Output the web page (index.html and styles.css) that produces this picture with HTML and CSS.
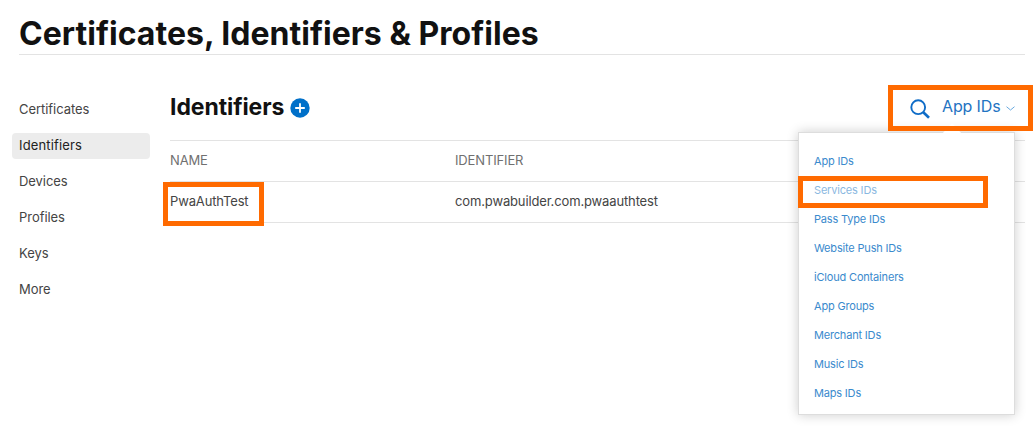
FILE: index.html
```html
<!DOCTYPE html>
<html lang="en">
<head>
<meta charset="utf-8">
<title>Certificates, Identifiers &amp; Profiles</title>
<link rel="stylesheet" href="styles.css">
</head>
<body>
<header class="page-header"><h1 class="page-title">Certificates, Identifiers &amp; Profiles</h1></header>
<div class="layout">
  <nav class="sidebar">
    <a class="nav-item">Certificates</a>
    <a class="nav-item active">Identifiers</a>
    <a class="nav-item">Devices</a>
    <a class="nav-item">Profiles</a>
    <a class="nav-item">Keys</a>
    <a class="nav-item">More</a>
  </nav>
  <main class="content">
    <div class="toolbar">
      <h2 class="section-title">Identifiers</h2>
      <svg class="add-icon" viewBox="0 0 20 20"><circle cx="10" cy="10" r="9.7" fill="#0070c9"/><path d="M10 5.2v9.6M5.2 10h9.6" stroke="#fff" stroke-width="1.8"/></svg>
      <div class="filter">
        <svg class="search-icon" viewBox="0 0 20 20" fill="none" stroke="#0f6cc7"><circle cx="8.2" cy="8.2" r="6.9" stroke-width="1.9"/><path d="M13 13l6 5.8" stroke-width="2.6"/></svg>
        <span class="filter-label">App IDs</span>
        <svg class="chevron" viewBox="0 0 9 5" fill="none" stroke="#69a9de"><path d="M.5.7l4 3.3 4-3.3"/></svg>
        <div class="menu">
          <span class="menu-arrow"></span>
          <a class="menu-item">App IDs</a>
          <a class="menu-item hovered"><span class="menu-text">Services IDs</span><span class="callout callout-service"></span></a>
          <a class="menu-item">Pass Type IDs</a>
          <a class="menu-item">Website Push IDs</a>
          <a class="menu-item">iCloud Containers</a>
          <a class="menu-item">App Groups</a>
          <a class="menu-item">Merchant IDs</a>
          <a class="menu-item">Music IDs</a>
          <a class="menu-item">Maps IDs</a>
        </div>
        <span class="callout callout-filter"></span>
      </div>
    </div>
    <div class="table">
      <div class="row head"><span class="cell-name">NAME</span><span class="cell-id">IDENTIFIER</span></div>
      <div class="row"><span class="cell-name">PwaAuthTest<span class="callout callout-name"></span></span><span class="cell-id">com.pwabuilder.com.pwaauthtest</span></div>
    </div>
  </main>
</div>
</body>
</html>
```
FILE: styles.css
```css
* { box-sizing: border-box; }
body {
  margin: 0;
  height: 448px;
  overflow: hidden;
  background: #fff;
  color: #444;
  font-family: Inter, "Liberation Sans", sans-serif;
  font-size: 13px;
  letter-spacing: -.14px;
}
.page-header {
  height: 55px;
  margin: 0 11px 0 19px;
  padding-top: 13px;
  border-bottom: 1px solid #e3e3e3;
}
.page-title {
  margin: 0;
  font-size: 32px;
  line-height: 41px;
  font-weight: 650;
  letter-spacing: .03px;
  color: #111;
  white-space: nowrap;
}
.layout { display: flex; padding: 0 11px 0 12px; }
.sidebar { width: 138px; margin-right: 20px; padding-top: 42px; letter-spacing: -.05px; }
.nav-item {
  display: block;
  height: 26px;
  margin-bottom: 10px;
  padding-left: 7px;
  line-height: 25px;
  border-radius: 4px;
}
.nav-item.active { background: #ececec; color: #222; letter-spacing: .14px; }
.content { flex: 1; padding-top: 31px; }
.toolbar { display: flex; align-items: flex-start; height: 54px; }
.section-title {
  width: 120px;
  margin: 5px 0 0;
  font-size: 23px;
  line-height: 32px;
  font-weight: 650;
  letter-spacing: -.08px;
  color: #111;
}
.add-icon { width: 20px; height: 20px; margin-top: 12px; }
.filter {
  position: relative;
  display: flex;
  width: 145px;
  height: 46px;
  margin: -1px -8px 0 auto;
  padding-left: 22px;
}
.search-icon { width: 20px; height: 20px; margin-top: 14px; }
.filter-label {
  width: 60px;
  margin-left: 12px;
  font-size: 16px;
  line-height: 43px;
  color: #2373c2;
  white-space: nowrap;
}
.chevron { width: 9px; height: 5px; margin: 21px 0 0 4px; }
.callout {
  position: absolute;
  z-index: 3;
  border: 5px solid #ff6a00;
}
.callout-filter { inset: 0; }
.menu {
  position: absolute;
  z-index: 2;
  left: -90px;
  top: 47px;
  width: 217px;
  height: 283px;
  padding: 14px 15px;
  background: #fff;
  border: 1px solid #ddd;
  box-shadow: 0 0 11px rgba(0, 0, 0, .2);
}
.menu-arrow {
  position: absolute;
  left: 143px;
  top: -10px;
  width: 20px;
  height: 11px;
  background: #fff;
  clip-path: polygon(50% 0, 100% 100%, 0 100%);
}
.menu-item {
  position: relative;
  display: block;
  height: 29px;
  font-size: 11px;
  line-height: 29px;
  letter-spacing: -.18px;
  color: #3a8acd;
}
.hovered .menu-text { opacity: .6; }
.callout-service { left: -16px; top: 0; width: 190px; height: 32px; }
.row {
  display: flex;
  height: 41px;
  line-height: 39px;
  border-top: 1px solid #e3e3e3;
}
.row:last-child { height: 42px; border-bottom: 1px solid #e3e3e3; }
.head { color: #707070; }
.cell-name { position: relative; width: 285px; }
.callout-name { left: -7px; top: 0; width: 101px; height: 44px; }
```
